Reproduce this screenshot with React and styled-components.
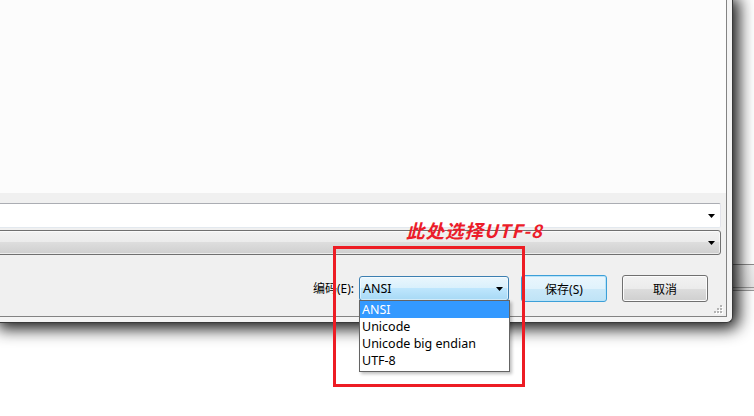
import React from 'react'
import styled, { createGlobalStyle } from 'styled-components'

const GlobalStyle = createGlobalStyle`
  html, body {
    margin: 0;
    padding: 0;
    background: #ffffff;
    overflow: hidden;
  }
  * {
    box-sizing: border-box;
  }
`

const encodings = ['ANSI', 'Unicode', 'Unicode big endian', 'UTF-8']

const DownArrow = () => (
  <svg width='7' height='4' viewBox='0 0 7 4'>
    <path d='M0 0h7L3.5 4z' fill='#000' />
  </svg>
)

const SizeGrip = () => (
  <svg width='9' height='9' viewBox='0 0 9 9'>
    {[
      [6, 0],
      [3, 3],
      [6, 3],
      [0, 6],
      [3, 6],
      [6, 6]
    ].map(([x, y]) => (
      <g key={`${x}-${y}`}>
        <rect x={x + 1} y={y + 1} width='2' height='2' fill='#ffffff' />
        <rect x={x} y={y} width='2' height='2' fill='#b4b4b4' />
      </g>
    ))}
  </svg>
)

const App = () => {
  return (
    <>
      <GlobalStyle />
      <Screen>
        <BehindWindow>
          <BehindLine />
        </BehindWindow>
        <Dialog>
          <Content>
            <FileArea />
            <Fields>
              <FileNameInput>
                <DownArrow />
              </FileNameInput>
              <TypeCombo>
                <DownArrow />
              </TypeCombo>
            </Fields>
            <Footer>
              <Label>编码(E):</Label>
              <EncodingSelect>
                <SelectBox>
                  <span>ANSI</span>
                  <DownArrow />
                </SelectBox>
                <DropList>
                  {encodings.map((name, i) => (
                    <Option key={name} selected={i === 0}>
                      {name}
                    </Option>
                  ))}
                </DropList>
              </EncodingSelect>
              <Buttons>
                <Button $primary>保存(S)</Button>
                <Button>取消</Button>
              </Buttons>
            </Footer>
            <Grip>
              <SizeGrip />
            </Grip>
          </Content>
        </Dialog>
        <CalloutText>此处选择UTF-8</CalloutText>
        <Highlight />
      </Screen>
    </>
  )
}

const Screen = styled.div`
  position: relative;
  width: 754px;
  height: 416px;
  overflow: hidden;
  background: #ffffff;
  font-family: 'Noto Sans', 'Noto Sans CJK SC', sans-serif;
  font-size: 12px;
  color: #000;
`

const BehindWindow = styled.div`
  position: absolute;
  left: 733px;
  top: 264px;
  width: 30px;
  height: 27px;
  border-top: 1px solid #8c8c8c;
  border-bottom: 1px solid #9a9a9a;
  background: linear-gradient(#f0f0f0, #e4e4e4);
`

const BehindLine = styled.div`
  margin-top: 22px;
  height: 1px;
  background: #9a9a9a;
`

const Dialog = styled.div`
  position: relative;
  z-index: 1;
  width: 733px;
  height: 323px;
  padding: 0 5px 5px 0;
  background: #f4f4f4;
  border-right: 1px solid #3a3a3a;
  border-bottom: 1px solid #3a3a3a;
  border-bottom-right-radius: 6px;
  box-shadow: 2px 2px 16px 4px rgba(0, 0, 0, 0.9);
`

const Content = styled.div`
  position: relative;
  display: flex;
  flex-direction: column;
  height: 100%;
  background: #f0f0f0;
  border-right: 1px solid #838383;
  border-bottom: 1px solid #838383;
`

const FileArea = styled.div`
  flex-shrink: 0;
  height: 193px;
  background: #fcfcfc;
`

const Fields = styled.div`
  display: flex;
  flex-direction: column;
  gap: 2px;
  padding: 10px 5px 0 0;
`

const FieldBase = styled.div`
  display: flex;
  align-items: center;
  justify-content: flex-end;
  height: 25px;
  margin-left: -6px;
  padding-right: 5px;
`

const FileNameInput = styled(FieldBase)`
  background: #ffffff;
  border: 1px solid;
  border-color: #abadb3 #e2e3ea #e3e9ef #e2e3ea;
  border-radius: 2px;
`

const TypeCombo = styled(FieldBase)`
  border: 1px solid #707070;
  border-radius: 3px;
  background: linear-gradient(#f2f2f2 0%, #ebebeb 50%, #dddddd 50%, #cfcfcf 100%);
  box-shadow: inset 0 0 0 1px rgba(255, 255, 255, 0.6);
`

const Footer = styled.div`
  display: flex;
  align-items: center;
  justify-content: flex-end;
  padding: 20px 18px 0 0;
`

const Label = styled.span`
  margin-right: 5px;
  line-height: 16px;
`

const EncodingSelect = styled.div`
  position: relative;
  margin-right: 12px;
`

const SelectBox = styled.div`
  display: flex;
  align-items: center;
  justify-content: space-between;
  width: 150px;
  height: 25px;
  padding: 0 5px 0 3px;
  font-size: 12.5px;
  border: 1px solid #3c7fb1;
  border-radius: 3px;
  background: linear-gradient(#eaf6fd 0%, #d9f0fc 50%, #bee6fd 50%, #a7d9f5 100%);
  box-shadow: inset 0 0 0 1px rgba(255, 255, 255, 0.5);
`

const DropList = styled.div`
  position: absolute;
  top: 24px;
  left: 0;
  width: 151px;
  padding: 0 0 2px;
  background: #ffffff;
  border: 1px solid #646464;
  box-shadow: 2px 2px 3px rgba(0, 0, 0, 0.25);
  z-index: 2;
`

const Option = styled.div`
  height: 17px;
  line-height: 17px;
  padding-left: 2px;
  font-size: 12.5px;
  white-space: nowrap;
  background: ${(p) => (p.selected ? '#3399ff' : 'transparent')};
  color: ${(p) => (p.selected ? '#ffffff' : '#000000')};
`

const Buttons = styled.div`
  display: flex;
  gap: 15px;
`

const Button = styled.button`
  width: 86px;
  height: 27px;
  padding: 0;
  font-family: inherit;
  font-size: 12px;
  color: #000;
  border-radius: 3px;
  border: 1px solid ${(p) => (p.$primary ? '#3c9fd8' : '#707070')};
  background: ${(p) =>
    p.$primary
      ? 'linear-gradient(#eaf6fd 0%, #e0f2fc 50%, #cbe9f9 50%, #bfe3f6 100%)'
      : 'linear-gradient(#f2f2f2 0%, #ebebeb 50%, #dddddd 50%, #cfcfcf 100%)'};
  box-shadow: inset 0 0 0 1px ${(p) => (p.$primary ? '#b9e3f8' : '#fcfcfc')};
`

const Grip = styled.div`
  position: absolute;
  right: 3px;
  bottom: 2px;
  width: 9px;
  height: 9px;
  line-height: 0;
`

const CalloutText = styled.div`
  position: absolute;
  left: 406px;
  top: 218px;
  z-index: 3;
  font-family: 'Noto Sans CJK SC', 'Noto Sans', sans-serif;
  font-size: 18.5px;
  letter-spacing: 1px;
  line-height: 24px;
  font-weight: 700;
  font-style: italic;
  color: #ec1c2a;
  white-space: nowrap;
`

const Highlight = styled.div`
  position: absolute;
  left: 333px;
  top: 246px;
  width: 192px;
  height: 141px;
  z-index: 3;
  border: 3px solid #ed1c24;
`

export default App
